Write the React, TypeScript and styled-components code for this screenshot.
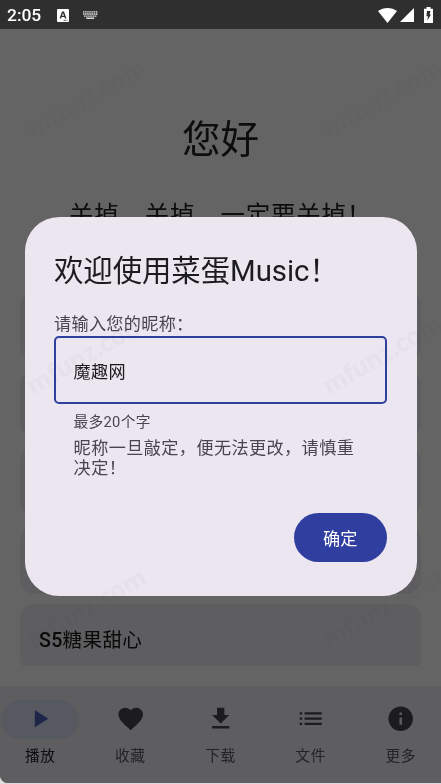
import React from "react";
import styled, { createGlobalStyle } from "styled-components";

const Global = createGlobalStyle`
  * { box-sizing: border-box; }
  body { margin: 0; background: #dcdcdc; }
`;

const Screen = styled.div`
  position: relative;
  width: 441px;
  height: 784px;
  overflow: hidden;
  display: flex;
  flex-direction: column;
  font-family: Roboto, "Noto Sans CJK SC", sans-serif;
  color: #0d0d0e;
`;

const Frame = styled.div`
  height: 783px;
  display: flex;
  flex-direction: column;
  background: #646464;
  border-radius: 0 0 0 8px;
  overflow: hidden;
`;

const StatusBar = styled.header`
  flex: none;
  height: 29px;
  display: flex;
  align-items: center;
  padding: 1px 8px 0 7px;
  background: #2f2f2f;
  color: #fff;
`;

const Clock = styled.span`
  width: 50px;
  font-size: 17.4px;
  font-weight: 500;
  line-height: 28px;
`;

const Notices = styled.div`
  flex: 1;
  display: flex;
  align-items: center;
  gap: 13.5px;
  height: 27px;
`;

const Signals = styled.div`
  display: flex;
  align-items: center;
  height: 28px;
`;

const Glyph = styled.svg<{ $gap?: number }>`
  display: block;
  flex: none;
  margin-left: ${(p) => p.$gap ?? 0}px;
`;

const Content = styled.main`
  flex: none;
  height: 637px;
  padding: 0 20px;
  display: flex;
  flex-direction: column;
  overflow: hidden;
`;

const Greeting = styled.h1`
  margin: 83px 0 0;
  height: 56px;
  line-height: 56px;
  text-align: center;
  font-size: 38.6px;
  font-weight: 400;
`;

const Notice = styled.p`
  margin: 30px 0 0;
  height: 36px;
  line-height: 36px;
  padding-left: 49px;
  white-space: nowrap;
  font-size: 24.5px;
  letter-spacing: 0.75px;
`;

const CardList = styled.div`
  margin-top: 58px;
  display: flex;
  flex-direction: column;
  gap: 10px;
`;

const Card = styled.div`
  flex: none;
  height: 68px;
  padding: 0 19px;
  border-radius: 14.7px;
  background: #5e5e60;
  font-size: 19.6px;
  line-height: 73px;
  letter-spacing: 0.3px;
  color: #09090a;
`;

const CardCode = styled.span`
  font-weight: 500;
`;

const Nav = styled.nav`
  flex: none;
  height: 98px;
  margin-top: 20px;
  display: flex;
  gap: 9.8px;
  background: #5e5e60;
  padding-top: 13.5px;
`;

const NavItem = styled.div<{ $active?: boolean }>`
  flex: 1;
  min-width: 0;
  display: flex;
  flex-direction: column;
  align-items: center;
  color: ${(p) => (p.$active ? "#1f2549" : "#1c1b1f")};
`;

const Pill = styled.div<{ $active?: boolean }>`
  width: 78.4px;
  height: 39.2px;
  border-radius: 20px;
  display: flex;
  align-items: center;
  justify-content: center;
  background: ${(p) => (p.$active ? "#575961" : "transparent")};
`;

const NavLabel = styled.span<{ $active?: boolean }>`
  margin-top: 6px;
  font-size: 14.7px;
  line-height: 22px;
  letter-spacing: 0.6px;
  color: ${(p) => (p.$active ? "#0d0d0f" : "#232226")};
`;

const DialogLayer = styled.div`
  position: absolute;
  inset: 0;
  padding: 217px 24.5px 188px;
  display: flex;
`;

const Dialog = styled.section`
  flex: 1;
  padding: 0 29.5px;
  border-radius: 34.3px;
  background: #ebe6f0;
  display: flex;
  flex-direction: column;
  color: #49454f;
`;

const Title = styled.h2`
  margin: 34px 0 0;
  font-size: 29.4px;
  line-height: 40px;
  font-weight: 400;
  letter-spacing: -0.05px;
  color: #1c1b1f;
`;

const Label = styled.label`
  margin-top: 22px;
  font-size: 17.15px;
  line-height: 23px;
  letter-spacing: 0.3px;
`;

const Field = styled.div`
  height: 68px;
  border: 2.45px solid #303f9f;
  border-radius: 5px;
  padding-left: 17.5px;
  display: flex;
  align-items: center;
  font-size: 17.15px;
  letter-spacing: 0.3px;
  color: #1c1b1f;
`;

const Help = styled.div`
  padding: 6.5px 19.6px 0;
  display: flex;
  flex-direction: column;
`;

const Limit = styled.span`
  font-size: 14.7px;
  line-height: 22px;
  letter-spacing: 0.3px;
`;

const Warning = styled.span`
  margin-top: 6.5px;
  font-size: 17.15px;
  line-height: 19.6px;
  letter-spacing: 0.4px;
`;

const Actions = styled.div`
  margin-top: auto;
  padding-bottom: 34px;
  display: flex;
  justify-content: flex-end;
`;

const Confirm = styled.button`
  width: 93.5px;
  height: 49px;
  padding: 0;
  border: 0;
  border-radius: 24.5px;
  background: #303f9f;
  color: #fff;
  font: 400 17.15px Roboto, "Noto Sans CJK SC", sans-serif;
`;

const Watermark = styled.span<{ $x: number; $y: number }>`
  position: absolute;
  left: ${(p) => p.$x - 80}px;
  top: ${(p) => p.$y - 18}px;
  width: 160px;
  text-align: center;
  font: 700 24.5px/36px "Noto Sans", sans-serif;
  letter-spacing: -0.3px;
  transform: rotate(-30deg);
  color: rgba(75, 75, 75, 0.03);
  mix-blend-mode: multiply;
  pointer-events: none;
`;

const items = [
  { label: "播放", d: "M8 5v14l11-7z" },
  {
    label: "收藏",
    d: "M12 21.35l-1.45-1.32C5.4 15.36 2 12.28 2 8.5 2 5.42 4.42 3 7.5 3c1.74 0 3.41.81 4.5 2.09C13.09 3.81 14.76 3 16.5 3 19.58 3 22 5.42 22 8.5c0 3.78-3.4 6.86-8.55 11.54L12 21.35z",
  },
  { label: "下载", d: "M5 20h14v-2H5v2zM19 9h-4V3H9v6H5l7 7 7-7z" },
  {
    label: "文件",
    d: "M3 12.8h2v-1.7H3zm0 4.3h2v-1.7H3zm0-8.6h2V6.8H3zm4 4.3h14v-1.7H7zm0 4.3h14v-1.7H7zM7 6.8v1.7h14V6.8z",
  },
  {
    label: "更多",
    d: "M12 2C6.48 2 2 6.48 2 12s4.48 10 10 10 10-4.48 10-10S17.52 2 12 2zm1 15h-2v-6h2v6zm0-8h-2V7h2v2z",
  },
];

const marks = [98, 354, 608].flatMap((y) => [
  { x: 86, y },
  { x: 382, y },
]);

export default function App() {
  return (
    <Screen>
      <Global />
      <Frame>
        <StatusBar>
          <Clock>2:05</Clock>
          <Notices>
            <Glyph width="12" height="13" viewBox="0 0 12 13">
              <rect width="12" height="13" rx="1" fill="#fff" />
              <path d="M3.3 9.5 5.5 3.3h1l2.2 6.2M4.2 7.4h3.6" fill="none" stroke="#2f2f2f" strokeWidth="1.4" />
              <path d="M6.5 11.3h4" stroke="#2f2f2f" strokeWidth=".8" strokeDasharray="2.4 .6" />
            </Glyph>
            <Glyph width="15" height="8" viewBox="0 0 15 8">
              <path
                d="M0 .9h15M0 3h15M1 5.1h13"
                stroke="#e8e8e8"
                strokeWidth="1.4"
                strokeDasharray="1.5 .6"
                fill="none"
              />
              <path d="M3.2 7.2h8" stroke="#e8e8e8" strokeWidth="1.4" />
            </Glyph>
          </Notices>
          <Signals>
            <Glyph width="19" height="15" viewBox="0 0 19 15">
              <path d="M0 3C5.5-1 13.5-1 19 3L9.5 15z" fill="#fff" />
            </Glyph>
            <Glyph $gap={3} width="14" height="14" viewBox="0 0 14 14">
              <path d="M14 0v14H0z" fill="#fff" />
            </Glyph>
            <Glyph $gap={10} width="9" height="16" viewBox="0 0 9 16">
              <path d="M2.5 0h4v1.8H9V16H0V1.8h2.5z" fill="#fff" />
              <path d="M3 4h3.5L5.6 7.4H7L3.3 13.6l.7-4.4H2.4z" fill="#2f2f2f" />
            </Glyph>
          </Signals>
        </StatusBar>
        <Content>
          <Greeting>您好</Greeting>
          <Notice>关掉，关掉，一定要关掉！</Notice>
          <CardList>
            <Card />
            <Card />
            <Card />
            <Card />
            <Card>
              <CardCode>S5</CardCode>糖果甜心
            </Card>
          </CardList>
        </Content>
        <Nav>
          {items.map(({ label, d }, i) => (
            <NavItem key={label} $active={i === 0}>
              <Pill $active={i === 0}>
                <Glyph width="29.4" height="29.4" viewBox="0 0 24 24">
                  <path d={d} fill="currentColor" />
                </Glyph>
              </Pill>
              <NavLabel $active={i === 0}>{label}</NavLabel>
            </NavItem>
          ))}
        </Nav>
      </Frame>
      <DialogLayer>
        <Dialog>
          <Title>欢迎使用菜蛋Music！</Title>
          <Label>请输入您的昵称：</Label>
          <Field>魔趣网</Field>
          <Help>
            <Limit>最多20个字</Limit>
            <Warning>昵称一旦敲定，便无法更改，请慎重决定！</Warning>
          </Help>
          <Actions>
            <Confirm>确定</Confirm>
          </Actions>
        </Dialog>
      </DialogLayer>
      {marks.map(({ x, y }) => (
        <Watermark key={`${x}-${y}`} $x={x} $y={y}>
          mfunz.com
        </Watermark>
      ))}
    </Screen>
  );
}
